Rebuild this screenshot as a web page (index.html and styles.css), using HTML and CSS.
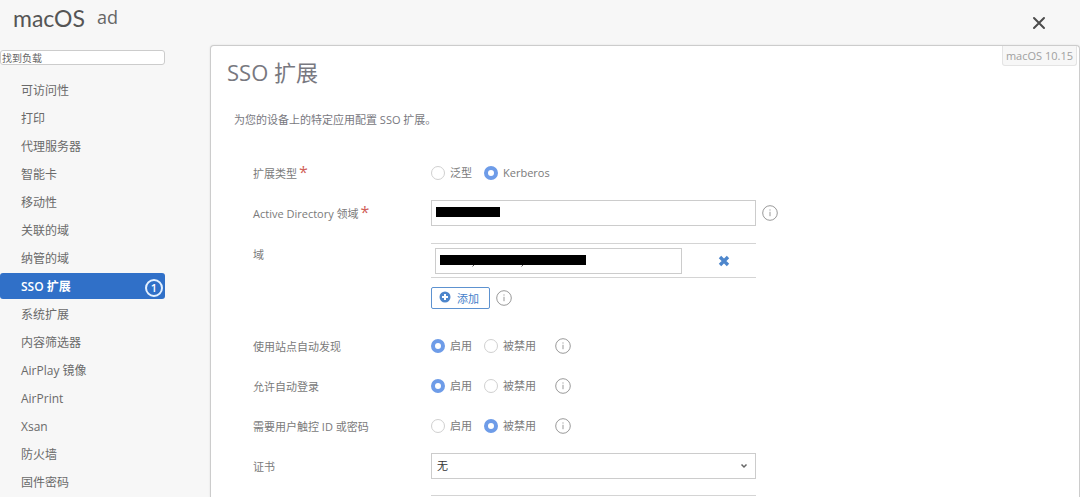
FILE: index.html
```
<!DOCTYPE html>
<html lang="zh-CN">
<head>
<meta charset="utf-8">
<meta name="viewport" content="width=device-width, initial-scale=1">
<title>macOS ad</title>
<link rel="stylesheet" href="styles.css">
</head>
<body>
<svg class="defs" aria-hidden="true">
  <symbol id="info" viewBox="0 0 16 16">
    <circle cx="8" cy="8" r="7.3" fill="none" stroke="#999" stroke-width="1"/>
    <path d="M8 6.8v4.4M8 4.4v1.2" fill="none" stroke="#999" stroke-width="1"/>
  </symbol>
</svg>
<div class="app">
  <header class="header">
    <h1 class="brand">macOS</h1>
    <span class="profile">ad</span>
    <button class="close" type="button" aria-label="关闭">
      <svg width="14" height="14" viewBox="0 0 14 14"><path d="M2 2l10 10M12 2L2 12" fill="none" stroke="#4c4c4c" stroke-width="2" stroke-linecap="round"/></svg>
    </button>
  </header>
  <div class="body">
    <aside class="sidebar">
      <input class="search" type="text" placeholder="找到负载" aria-label="找到负载">
      <nav class="nav">
        <a class="item" href="#">可访问性</a>
        <a class="item" href="#">打印</a>
        <a class="item" href="#">代理服务器</a>
        <a class="item" href="#">智能卡</a>
        <a class="item" href="#">移动性</a>
        <a class="item" href="#">关联的域</a>
        <a class="item" href="#">纳管的域</a>
        <a class="item active" href="#">SSO 扩展<span class="count">1</span></a>
        <a class="item" href="#">系统扩展</a>
        <a class="item" href="#">内容筛选器</a>
        <a class="item" href="#">AirPlay 镜像</a>
        <a class="item" href="#">AirPrint</a>
        <a class="item" href="#">Xsan</a>
        <a class="item" href="#">防火墙</a>
        <a class="item" href="#">固件密码</a>
      </nav>
    </aside>
    <main class="panel">
      <span class="version">macOS 10.15</span>
      <h2 class="title">SSO 扩展</h2>
      <p class="intro">为您的设备上的特定应用配置 SSO 扩展。</p>
      <form class="form">
        <div class="row" role="radiogroup" aria-labelledby="l-type">
          <span class="label" id="l-type">扩展类型<span class="req">*</span></span>
          <div class="controls">
            <label class="choice"><input type="radio" name="type">泛型</label>
            <label class="choice"><input type="radio" name="type" checked>Kerberos</label>
          </div>
        </div>
        <div class="row">
          <label class="label" for="realm">Active Directory 领域<span class="req">*</span></label>
          <div class="controls">
            <div class="field">
              <input class="text" id="realm" type="text">
              <svg class="mask" width="64" height="10" viewBox="0 0 64 10"><path d="M0 0h64v10H0z"/></svg>
            </div>
            <button class="info" type="button" aria-label="信息"><svg><use href="#info"/></svg></button>
          </div>
        </div>
        <div class="row domains">
          <label class="label" for="domain">域</label>
          <div class="stack">
            <div class="entry">
              <div class="domain">
                <input class="text" id="domain" type="text">
                <svg class="mask" width="146" height="12" viewBox="0 0 146 12"><path d="M0 0h146v10H0z"/><path d="M34 10l-1.5 1.5M83 10l-1.5 1.5" stroke="#555"/></svg>
              </div>
              <button class="remove" type="button" aria-label="删除">
                <svg width="12" height="12" viewBox="0 0 12 12"><path d="M2 2l8 8M10 2L2 10" fill="none" stroke="#4d86cc" stroke-width="3.4"/></svg>
              </button>
            </div>
            <div class="controls">
              <button class="add" type="button">
                <svg width="12" height="12" viewBox="0 0 12 12"><circle cx="6" cy="6" r="5.5" fill="#4d86cc"/><path d="M6 3v6M3 6h6" stroke="#fff" stroke-width="2"/></svg>
                <span class="add-text">添加</span>
              </button>
              <button class="info" type="button" aria-label="信息"><svg><use href="#info"/></svg></button>
            </div>
          </div>
        </div>
        <div class="row" role="radiogroup" aria-labelledby="l-site">
          <span class="label" id="l-site">使用站点自动发现</span>
          <div class="controls">
            <label class="choice"><input type="radio" name="site" checked>启用</label>
            <label class="choice"><input type="radio" name="site">被禁用</label>
            <button class="info far" type="button" aria-label="信息"><svg><use href="#info"/></svg></button>
          </div>
        </div>
        <div class="row" role="radiogroup" aria-labelledby="l-login">
          <span class="label" id="l-login">允许自动登录</span>
          <div class="controls">
            <label class="choice"><input type="radio" name="login" checked>启用</label>
            <label class="choice"><input type="radio" name="login">被禁用</label>
            <button class="info far" type="button" aria-label="信息"><svg><use href="#info"/></svg></button>
          </div>
        </div>
        <div class="row" role="radiogroup" aria-labelledby="l-touch">
          <span class="label" id="l-touch">需要用户触控 ID 或密码</span>
          <div class="controls">
            <label class="choice"><input type="radio" name="touch">启用</label>
            <label class="choice"><input type="radio" name="touch" checked>被禁用</label>
            <button class="info far" type="button" aria-label="信息"><svg><use href="#info"/></svg></button>
          </div>
        </div>
        <div class="row">
          <label class="label" for="cert">证书</label>
          <div class="controls">
            <div class="field">
              <select class="select" id="cert"><option>无</option></select>
              <svg class="chevron" width="8" height="6" viewBox="0 0 8 6"><path d="M1.5 1.5L4 4l2.5-2.5" fill="none" stroke="#666" stroke-width="1.5"/></svg>
            </div>
          </div>
        </div>
        <div class="row next"><div class="stack end"></div></div>
      </form>
    </main>
  </div>
</div>
</body>
</html>
```
FILE: styles.css
```
* { box-sizing: border-box; }
body {
  margin: 0;
  background: #f7f7f7;
  color: #7a7a7a;
  font: 12px/18px "Open Sans", "Noto Sans CJK SC", sans-serif;
}
button, input, select { font: inherit; color: inherit; margin: 0; }
button { padding: 0; border: 0; background: none; }
svg { display: block; }
.defs { position: absolute; width: 0; height: 0; }
.app { display: flex; flex-direction: column; height: 100vh; overflow: hidden; }

.header { display: flex; align-items: flex-start; flex: none; height: 45px; padding: 0 34px 0 13px; }
.brand { margin: 3px 12px 0 0; font: 400 23px/30px Lato, "Open Sans", sans-serif; color: #555; }
.profile { margin-top: 4px; font-size: 18px; line-height: 27px; color: #666; }
.close { margin: 16px 0 0 auto; }

.body { display: flex; flex: 1; min-height: 0; }
.sidebar { flex: none; width: 165px; margin-right: 45px; padding-top: 5px; }
.search {
  display: block; width: 100%; height: 15px; padding: 0 1px;
  border: 1px solid #ccc; border-radius: 3px; background: #fff;
  font-size: 10px; line-height: 13px;
}
.search::placeholder { color: #666; opacity: 1; }
.nav { display: flex; flex-direction: column; gap: 2px; margin-top: 12px; }
.item {
  display: flex; align-items: center; justify-content: space-between;
  height: 26px; padding: 1px 2px 0 21px; border-radius: 3px;
  color: #6a6a6a; text-decoration: none;
}
.active { background: #3070c8; color: #fff; font-weight: 600; }
.count {
  width: 18px; height: 18px; margin-top: 2px; border: 2px solid #e3f0ff; border-radius: 9px;
  font-size: 11px; line-height: 14px; text-align: center;
}

.panel {
  position: relative; flex: 1; min-width: 0; overflow: hidden;
  padding: 9px 16px 0; background: #fff;
  border: 1px solid #ccc; border-bottom: 0; border-radius: 4px 4px 0 0;
  box-shadow: 0 0 2px #ddd;
}
.version {
  position: absolute; top: 0; right: 2px; padding: 0 3px; height: 20px;
  border: 1px solid #e4e4e4; border-top: 0; border-radius: 0 0 3px 3px;
  background: #f7f7f7; color: #a0a0a0; font-size: 11px; line-height: 19px;
}
.title { margin: 0; font-size: 22px; line-height: 34px; font-weight: 400; color: #787880; }
.intro { margin: 22px 0 0 7px; font-size: 11px; line-height: 18px; color: #787880; }
.form { margin: 24px 0 0 26px; font-size: 11px; }
.row { display: flex; align-items: center; min-height: 40px; }
.label { flex: none; width: 178px; padding-top: 1px; }
.req { margin-left: 2px; color: #d06058; font-size: 16px; line-height: 12px; }
.controls { display: flex; align-items: center; flex: 1; }
.choice { display: flex; align-items: center; gap: 5px; margin-right: 12px; }
.choice input {
  appearance: none; width: 14px; height: 14px;
  border: 1px solid #d0d0d0; border-radius: 50%; background: #fff;
}
.choice input:checked { border: 4px solid #6e9ce8; }
.field, .domain { position: relative; flex: 0 1 325px; }
.text, .select {
  display: block; width: 100%; height: 26px; padding: 0 5px;
  border: 1px solid #ccc; border-radius: 0; background: #fff; color: #333;
}
.select { appearance: none; }
.chevron { position: absolute; right: 8px; top: 10px; }
.mask { position: absolute; left: 5px; top: 7px; }
.info { flex: none; margin-left: 6px; }
.info svg { width: 16px; height: 16px; }
.far { margin-left: 7px; }

.domains { align-items: flex-start; padding-top: 10px; }
.domains .label { padding-top: 3px; }
.stack { flex: 0 1 325px; }
.entry {
  display: flex; align-items: center; padding: 4px 4px 3px;
  border-top: 1px solid #d4d4d4; border-bottom: 1px solid #d4d4d4;
}
.domain { flex: 0 1 247px; }
.remove { margin: 0 22px 0 auto; }
.domains .controls { padding: 9px 0 17px; }
.add {
  display: flex; align-items: center; gap: 6px; height: 22px; padding: 0 10px 0 7px;
  border: 1px solid #5d92d0; border-radius: 2px; color: #4480ca;
}
.add svg { margin-bottom: 3px; }
.add-text { font-size: 11px; line-height: 16px; padding-top: 2px; }
.next { align-items: flex-start; padding: 9px 0 0 178px; }
.end { border-top: 1px solid #d4d4d4; }
```
